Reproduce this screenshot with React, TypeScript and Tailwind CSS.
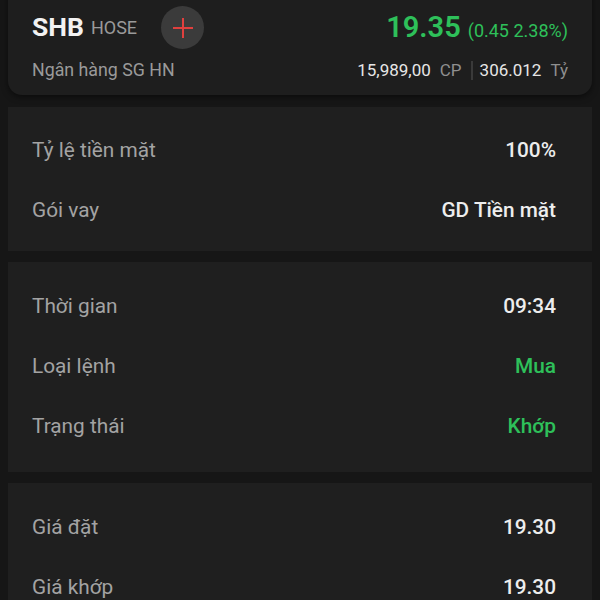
import React from "react";

const font = { fontFamily: "Roboto, 'Noto Sans', sans-serif" };

function Row({ label, value, green }: { label: string; value: string; green?: boolean }) {
  return (
    <div className="flex h-[60px] items-center justify-between">
      <span className="text-[20.8px] text-[#a3a3a3]">{label}</span>
      <span className={"text-[20.8px] font-medium " + (green ? "text-[#2ec05a]" : "text-[#ededed]")}>{value}</span>
    </div>
  );
}

export default function App() {
  return (
    <div className="h-[600px] w-[600px] overflow-hidden bg-[#161616]" style={font}>
      <div className="mx-2 -mt-[14px] rounded-b-[14px] bg-[#1e1e1e] px-6 pb-[11px] pt-[13px] shadow-[0_2px_6px_rgba(0,0,0,0.5)]">
        <div className="flex h-[57px] items-center justify-between">
          <div className="flex items-center">
            <span className="text-[26.5px] font-bold leading-none text-[#f2f2f2]">SHB</span>
            <span className="ml-[7px] text-[18px] leading-none text-[#9a9a9a]">HOSE</span>
            <div className="ml-6 flex h-[43px] w-[43px] items-center justify-center rounded-full bg-[#3b3b3b]">
              <svg width="22" height="22" viewBox="0 0 22 22">
                <path d="M11 1v20M1 11h20" stroke="#e0403e" strokeWidth="2" />
              </svg>
            </div>
          </div>
          <div className="flex items-baseline">
            <span className="text-[29px] font-semibold leading-none text-[#2ec05a]">19.35</span>
            <span className="ml-[7px] text-[18px] leading-none text-[#2ec05a]">(0.45 2.38%)</span>
          </div>
        </div>
        <div className="flex items-center justify-between pt-[1px]">
          <span className="text-[17.8px] text-[#9a9a9a]">Ngân hàng SG HN</span>
          <div className="flex items-center text-[17px]">
            <span className="text-[#e6e6e6]">15,989,00</span>
            <span className="ml-[9px] text-[#8f8f8f]">CP</span>
            <span className="ml-[9px] h-[19px] w-[2px] bg-[#3a3a3a]"></span>
            <span className="ml-[7px] text-[#e6e6e6]">306.012</span>
            <span className="ml-[9px] text-[#8f8f8f]">Tỷ</span>
          </div>
        </div>
      </div>

      <div className="mx-2 mt-[12px] flex flex-col gap-[11px]">
        <div className="bg-[#1f1f1f] pb-[10px] pl-6 pr-9 pt-[14px]">
          <Row label="Tỷ lệ tiền mặt" value="100%" />
          <Row label="Gói vay" value="GD Tiền mặt" />
        </div>
        <div className="bg-[#1f1f1f] py-[15px] pl-6 pr-9">
          <Row label="Thời gian" value="09:34" />
          <Row label="Loại lệnh" value="Mua" green />
          <Row label="Trạng thái" value="Khớp" green />
        </div>
        <div className="bg-[#1f1f1f] py-[15px] pl-6 pr-9">
          <Row label="Giá đặt" value="19.30" />
          <Row label="Giá khớp" value="19.30" />
        </div>
      </div>
    </div>
  );
}
